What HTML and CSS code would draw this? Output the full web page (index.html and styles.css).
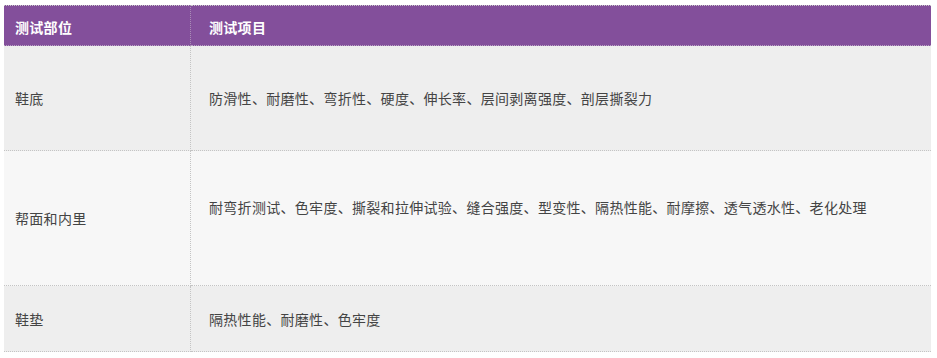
FILE: index.html
```html
<!DOCTYPE html>
<html lang="zh-CN">
<head>
<meta charset="utf-8">
<title>测试项目</title>
<link rel="stylesheet" href="styles.css">
</head>
<body>
<table class="spec">
  <colgroup>
    <col class="col-part">
    <col class="col-items">
  </colgroup>
  <thead>
    <tr class="head-row">
      <th class="c1">测试部位</th>
      <th class="c2">测试项目</th>
    </tr>
  </thead>
  <tbody>
    <tr class="row row-a r1">
      <td class="c1">鞋底</td>
      <td class="c2">防滑性、耐磨性、弯折性、硬度、伸长率、层间剥离强度、剖层撕裂力</td>
    </tr>
    <tr class="row row-b r2">
      <td class="c1">帮面和内里</td>
      <td class="c2 lift">耐弯折测试、色牢度、撕裂和拉伸试验、缝合强度、型变性、隔热性能、耐摩擦、透气透水性、老化处理</td>
    </tr>
    <tr class="row row-a r3">
      <td class="c1">鞋垫</td>
      <td class="c2">隔热性能、耐磨性、色牢度</td>
    </tr>
  </tbody>
</table>
</body>
</html>
```

FILE: styles.css
```css
html, body {
  margin: 0;
  padding: 0;
  background: #ffffff;
}

body {
  padding: 5px 0 0 4px;
  font-family: "Noto Sans CJK SC", "Noto Sans", sans-serif;
  font-size: 14px;
  letter-spacing: 0.3px;
  color: #444444;
}

.spec {
  width: 927px;
  border-collapse: separate;
  border-spacing: 0;
  table-layout: fixed;
}

.col-part {
  width: 187px;
}

.spec th,
.spec td {
  border-bottom: 1px dotted #c4c4c4;
  text-align: left;
  vertical-align: middle;
  line-height: 20px;
  padding-top: 0;
  padding-bottom: 0;
  box-sizing: border-box;
}

.spec .c1 {
  padding-left: 11px;
  border-right: 1px dotted #c4c4c4;
}

.spec .c2 {
  padding-left: 18px;
}

.head-row th {
  background: #834f9b;
  color: #ffffff;
  font-weight: 700;
  height: 41px;
  padding-top: 2px;
  border-top: 1px dotted #c9c9c9;
  border-bottom-color: #b9a3c4;
}

.head-row th.c1 {
  border-right-color: #a98cb6;
}

.row-a td {
  background: #eeeeee;
}

.row-b td {
  background: #f7f7f7;
}

.r1 td {
  height: 105px;
}

.r2 td {
  height: 135px;
}

.r2 td.lift {
  padding-bottom: 22px;
}

.r3 td {
  height: 66px;
}
```
